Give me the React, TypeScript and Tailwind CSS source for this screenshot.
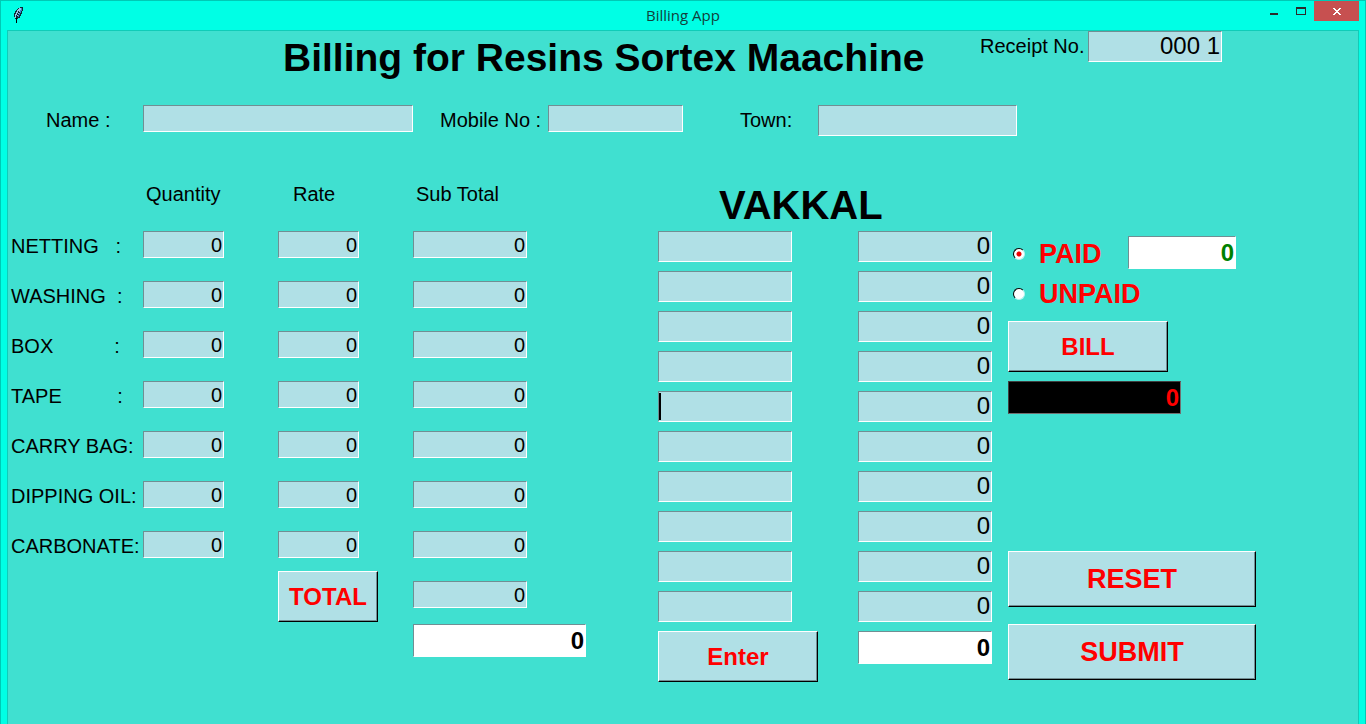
import clsx from "clsx";

const sunken =
  "block border border-t-[#708f93] border-l-[#708f93] border-b-white border-r-white pl-1 pr-px outline-none";
const powder = "bg-[#b0e0e6] text-black";
const raised =
  "block cursor-default border border-t-white border-l-white border-b-black border-r-black bg-[#b0e0e6] text-center font-bold text-[#ff0000] shadow-[inset_-1px_-1px_0_#708f93]";

type FieldProps = {
  label: string;
  value?: string;
  className: string;
  tone?: string;
  id?: string;
};

function Field({ label, value = "", className, tone = powder, id }: FieldProps) {
  return (
    <input
      id={id}
      type="text"
      aria-label={id ? undefined : label}
      defaultValue={value}
      className={clsx(sunken, tone, className)}
    />
  );
}

const items = [
  { name: "NETTING", label: "NETTING   :" },
  { name: "WASHING", label: "WASHING  :" },
  { name: "BOX", label: "BOX           :" },
  { name: "TAPE", label: "TAPE          :" },
  { name: "CARRY BAG", label: "CARRY BAG:" },
  { name: "DIPPING OIL", label: "DIPPING OIL:" },
  { name: "CARBONATE", label: "CARBONATE:" },
];

const lots = [1, 2, 3, 4, 5, 6, 7, 8, 9, 10];
const activeLot = 5;

function Feather() {
  return (
    <svg width="10" height="16" viewBox="0 0 10 16" shapeRendering="crispEdges" aria-hidden="true">
      <path d="M6 0H9V4H8V7H7V9H6V11H4V12H3V16H2V12H1V10H0V6H1V4H2V3H3V2H4V1H6Z" fill="#0b2a35" />
      <path d="M5 1H7V3H6V5H5V7H4V9H3V10H2V11H1V7H2V5H3V3H4V2H5Z" fill="#9cc4e6" />
      <path d="M7 1H8V4H7V6H6V8H5V10H4V8H5V6H6V3H7Z" fill="#3f7fc8" />
      <path d="M4 4H5V6H4V8H3V10H2V8H3V6H4Z" fill="#0b2a35" />
      <path d="M2 11H3V16H2Z" fill="#000" />
    </svg>
  );
}

function TitleBar() {
  return (
    <header className="grid h-[29px] grid-cols-[1fr_auto_1fr] items-start">
      <div className="pl-[13px] pt-[6px]">
        <Feather />
      </div>
      <div className="pt-1 font-['Open_Sans','Noto_Sans',sans-serif] text-[15px] leading-5 text-[#123f3c]">
        Billing App
      </div>
      <div className="flex justify-end pr-[6px]">
        <button aria-label="Minimize" className="flex h-5 w-[28px] items-center justify-center">
          <svg width="8" height="10" viewBox="0 0 8 10" shapeRendering="crispEdges">
            <rect y="7" width="8" height="2" fill="#2b2b2b" />
          </svg>
        </button>
        <button aria-label="Maximize" className="flex h-5 w-[26px] items-center justify-center">
          <svg width="10" height="8" viewBox="0 0 10 8" shapeRendering="crispEdges">
            <path d="M0 0H10V8H0ZM1 2V7H9V2Z" fill="#2b2b2b" fillRule="evenodd" />
          </svg>
        </button>
        <button aria-label="Close" className="flex h-5 w-[45px] items-center justify-center bg-[#c75050]">
          <svg width="8" height="7" viewBox="0 0 8 7" shapeRendering="crispEdges">
            <path d="M0 0H2V1H3V2H5V1H6V0H8V1H7V2H6V3H5V4H6V5H7V6H8V7H6V6H5V5H3V6H2V7H0V6H1V5H2V4H3V3H2V2H1V1H0Z" fill="#fff" />
          </svg>
        </button>
      </div>
    </header>
  );
}

function ItemsPanel() {
  const small = "h-[27px] text-right text-[20px]";
  return (
    <section className="pt-[7px]">
      <div className="grid h-[49px] grid-cols-[135px_135px_135px_1fr] leading-6">
        <span />
        <span className="pl-[3px]">Quantity</span>
        <span className="pl-[15px]">Rate</span>
        <span className="pl-[3px]">Sub Total</span>
      </div>
      {items.map((item) => (
        <div key={item.name} className="grid h-[50px] grid-cols-[135px_135px_135px_1fr] items-start">
          <label htmlFor={item.name} className="whitespace-pre pl-[3px] leading-[30px]">
            {item.label}
          </label>
          <Field id={item.name} label={item.name} value="0" className={clsx(small, "w-[81px]")} />
          <Field label={item.name + " rate"} value="0" className={clsx(small, "w-[81px]")} />
          <Field label={item.name + " sub total"} value="0" className={clsx(small, "w-[114px]")} />
        </div>
      ))}
      <div className="-mt-[10px] grid grid-cols-[270px_135px_1fr] items-start">
        <span />
        <button className={clsx(raised, "h-[51px] w-[100px] text-[24px]")}>TOTAL</button>
        <div className="flex flex-col gap-4 pt-[10px]">
          <Field label="Sub total sum" value="0" className={clsx(small, "w-[114px]")} />
          <Field
            label="Grand total"
            value="0"
            tone="bg-white text-black"
            className="h-[33px] w-[173px] text-right text-[24px] font-bold"
          />
        </div>
      </div>
    </section>
  );
}

function LotsPanel() {
  return (
    <section>
      <h2 className="flex h-14 items-center pl-[61px] pt-1 text-[40px] leading-none font-bold">VAKKAL</h2>
      <div className="mb-[9px] flex flex-col gap-[9px]">
        {lots.map((lot) => (
          <div key={lot} className="grid grid-cols-[200px_134px]">
            <div className="relative">
              <Field label={"Lot " + lot} className="h-[31px] w-[134px] text-[24px]" />
              {lot === activeLot && <span className="absolute top-[2px] left-px h-[27px] w-[2px] bg-black" />}
            </div>
            <Field label={"Lot " + lot + " amount"} value="0" className="h-[31px] w-full pb-[2px] text-right text-[24px]" />
          </div>
        ))}
      </div>
      <div className="grid grid-cols-[200px_134px] items-start">
        <button className={clsx(raised, "h-[51px] w-40 text-[24px]")}>Enter</button>
        <Field
          label="Lots total"
          value="0"
          tone="bg-white text-black"
          className="h-[33px] w-full text-right text-[24px] font-bold"
        />
      </div>
    </section>
  );
}

function StatusRadio({ label, checked }: { label: string; checked?: boolean }) {
  return (
    <label className="flex items-center gap-[14px] pl-[5px] text-[27px] leading-8 font-bold text-[#ff0000]">
      <input
        type="radio"
        name="status"
        defaultChecked={checked}
        className="size-3 appearance-none rounded-full border border-t-black border-l-black border-b-[#b0f5ee] border-r-[#b0f5ee] bg-white checked:bg-[radial-gradient(circle,#f00000_2px,white_3px)]"
      />
      {label}
    </label>
  );
}

function PaymentPanel() {
  return (
    <section className="flex flex-col items-start pt-[61px]">
      <div className="flex h-10 items-start">
        <div className="w-[120px] pt-[2px]">
          <StatusRadio label="PAID" checked />
        </div>
        <Field
          label="Paid amount"
          value="0"
          tone="bg-white text-[#008000]"
          className="h-[33px] w-[108px] text-right text-[24px] font-bold"
        />
      </div>
      <div className="h-[45px] pt-[2px]">
        <StatusRadio label="UNPAID" />
      </div>
      <button className={clsx(raised, "h-[51px] w-40 text-[24px]")}>BILL</button>
      <input
        type="text"
        aria-label="Bill amount"
        defaultValue="0"
        className="mt-[9px] block h-[33px] w-[173px] border border-[#707070] border-t-[#404040] border-l-[#404040] bg-black pr-px text-right text-[24px] font-bold text-[#ff0000]"
      />
      <button className={clsx(raised, "mt-[137px] h-14 w-[248px] text-[27px]")}>RESET</button>
      <button className={clsx(raised, "mt-[17px] h-14 w-[248px] text-[27px]")}>SUBMIT</button>
    </section>
  );
}

export default function App() {
  return (
    <div className="flex min-h-screen min-w-[1320px] flex-col border-x border-t border-[#00c9b5] bg-[#00ffe5] font-['Liberation_Sans',Arial,sans-serif] text-[20px] text-black">
      <TitleBar />
      <main className="mx-[6px] flex-1 border-x border-t border-[#10ccb8] bg-[#40e0d0]">
        <div className="flex h-[74px] items-start">
          <h1 className="w-[972px] pt-1 pl-[275px] text-[39px] leading-[46px] font-bold whitespace-nowrap">
            Billing for Resins Sortex Maachine
          </h1>
          <label htmlFor="receipt" className="w-[108px] leading-[30px] whitespace-nowrap">
            Receipt No.
          </label>
          <Field id="receipt" label="Receipt No." value="000 1" className="h-[31px] w-[134px] pb-[2px] text-right text-[24px]" />
        </div>
        <div className="flex h-[70px] items-start leading-[30px]">
          <label htmlFor="customer" className="w-[135px] pl-[38px]">Name :</label>
          <Field id="customer" label="Name" className="h-[27px] w-[270px]" />
          <label htmlFor="mobile" className="w-[135px] pl-[27px] whitespace-nowrap">Mobile No :</label>
          <Field id="mobile" label="Mobile No" className="h-[27px] w-[135px]" />
          <label htmlFor="town" className="w-[135px] pl-[57px]">Town:</label>
          <Field id="town" label="Town" className="h-[31px] w-[199px]" />
        </div>
        <div className="grid grid-cols-[650fr_350fr_350fr] items-start pb-10">
          <ItemsPanel />
          <LotsPanel />
          <PaymentPanel />
        </div>
      </main>
    </div>
  );
}
